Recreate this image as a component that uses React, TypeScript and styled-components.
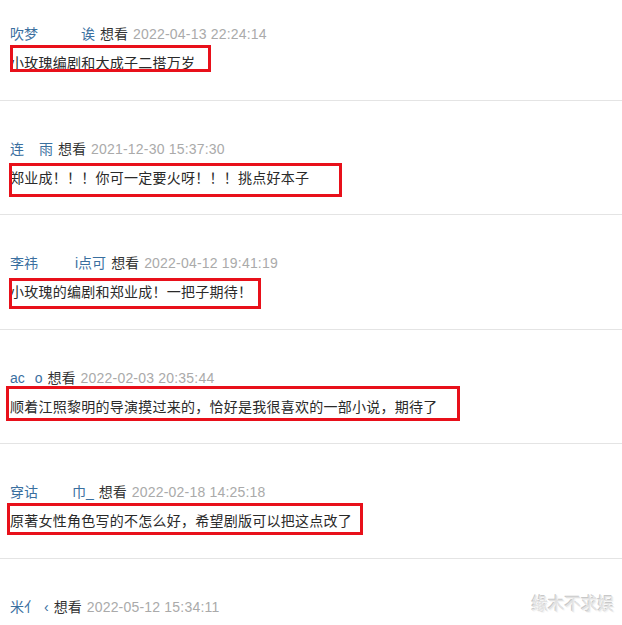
import styled, { createGlobalStyle } from 'styled-components'

const GlobalStyle = createGlobalStyle`
	html, body {
		margin: 0;
		padding: 0;
		background: #fff;
	}
	body {
		font-family: 'Liberation Sans', Arial, 'Noto Sans CJK SC', sans-serif;
	}
`

const Page = styled.div`
	position: relative;
	width: 622px;
	height: 625px;
	overflow: hidden;
	background: #fff;
`
const List = styled.div`
	margin-top: -14px;
`
const Item = styled.div`
	position: relative;
	box-sizing: border-box;
	height: 114.5px;
	padding: 38px 0 0 10px;
	border-bottom: 1px solid #e4e4e4;
`
const Header = styled.div`
	display: flex;
	align-items: baseline;
	height: 18px;
	line-height: 18px;
	font-size: 14px;
	white-space: nowrap;
`
const Name = styled.span`
	color: #3a6f9f;
	font-family: 'Liberation Sans', 'Noto Sans CJK SC', sans-serif;
`
const NameGap = styled.span<{ $w: number }>`
	display: inline-block;
	width: ${({ $w }) => $w}px;
`
const Status = styled.span`
	margin-left: 5px;
	color: #333;
	font-family: 'Noto Sans CJK SC', sans-serif;
`
const Time = styled.span`
	margin-left: 5px;
	color: #aaa;
	letter-spacing: 0.2px;
`
const Content = styled.p`
	margin: 10px 0 0 0;
	line-height: 20px;
	font-size: 14px;
	letter-spacing: 0.25px;
	color: #2a2a2a;
	font-family: 'Noto Sans CJK SC', sans-serif;
	white-space: nowrap;
`
const Mark = styled.span<{ $x: number; $y: number; $w: number; $h: number }>`
	position: absolute;
	box-sizing: border-box;
	left: ${({ $x }) => $x}px;
	top: ${({ $y }) => $y}px;
	width: ${({ $w }) => $w}px;
	height: ${({ $h }) => $h}px;
	border: 3.5px solid #e8101a;
	pointer-events: none;
`
const Watermark = styled.div`
	position: absolute;
	right: 8px;
	bottom: 10px;
	font-family: 'Noto Sans CJK SC', sans-serif;
	font-size: 16.5px;
	color: #e2e2e2;
	text-shadow: 1px 1px 0 #f6f6f6, -1px -1px 0 #c8c8c8;
`

type Comment = {
	name: [string, number, string]
	time: string
	text: string
	box: [number, number, number, number] | null
}

const comments: Comment[] = [
	{ name: ['吹梦', 43, '诶'], time: '2022-04-13 22:24:14', text: '小玫瑰编剧和大成子二搭万岁', box: [10, 59, 201, 27] },
	{ name: ['连', 15, '雨'], time: '2021-12-30 15:37:30', text: '郑业成！！！你可一定要火呀！！！挑点好本子', box: [9, 62, 333, 34] },
	{ name: ['李祎', 37, 'i点可'], time: '2022-04-12 19:41:19', text: '小玫瑰的编剧和郑业成！一把子期待！', box: [9, 62.5, 252, 31] },
	{ name: ['ac', 10, 'o'], time: '2022-02-03 20:35:44', text: '顺着江照黎明的导演摸过来的，恰好是我很喜欢的一部小说，期待了', box: [6, 56, 454, 35] },
	{ name: ['穿诂', 34, '巾_'], time: '2022-02-18 14:25:18', text: '原著女性角色写的不怎么好，希望剧版可以把这点改了', box: [7, 58.5, 356, 32] },
	{ name: ['米亻', 6, '‹'], time: '2022-05-12 15:34:11', text: '', box: null },
]

const App: React.FC = () => {
	return (
		<Page>
			<GlobalStyle />
			<List>
				{comments.map((c, i) => (
					<Item key={i}>
						<Header>
							<Name>
								{c.name[0]}
								<NameGap $w={c.name[1]} />
								{c.name[2]}
							</Name>
							<Status>想看</Status>
							<Time>{c.time}</Time>
						</Header>
						{c.text && <Content>{c.text}</Content>}
						{c.box && <Mark $x={c.box[0]} $y={c.box[1]} $w={c.box[2]} $h={c.box[3]} />}
					</Item>
				))}
			</List>
			<Watermark>缘木不求娱</Watermark>
		</Page>
	)
}
export default App
